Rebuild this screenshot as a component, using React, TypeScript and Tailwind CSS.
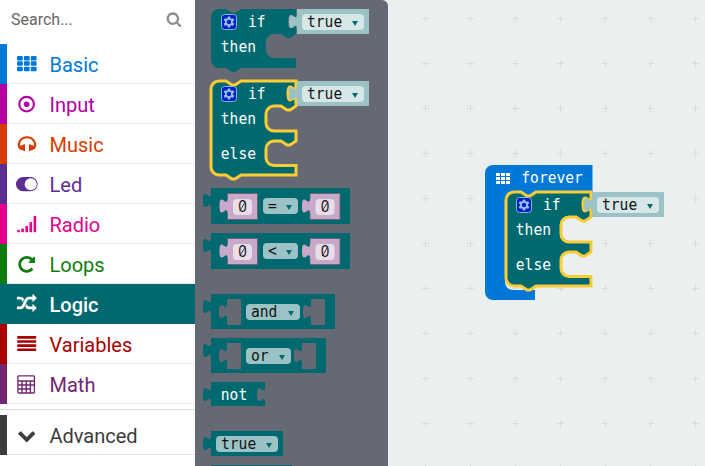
import type { ReactNode } from "react";

const TEAL = "#006970";
const PALE = "#9bc3c6";
const TAB = "c 0,10 -8,-8 -8,7.5 s 8,-2.5 8,7.5";

/* ---------- toolbox ---------- */

function Glyph({ d, size, x, y }: { d: string; size: number; x: number; y: number }) {
  return <path d={d} fill="currentColor" transform={`translate(${x} ${y}) scale(${size / 1792})`} />;
}

const RANDOM =
  "M666 481q-60 92-137 273-22-45-37-72.5t-40.5-63.5-51-56.5-63-35-81.5-14.5h-224q-14 0-23-9t-9-23v-192q0-14 9-23t23-9h224q250 0 410 225zm1126 799q0 14-9 23l-320 320q-9 9-23 9-13 0-22.5-9.5t-9.5-22.5v-192q-32 0-85 .5t-81 1-73-1-71-5-64-10.5-63-18.5-58-28.5-59-40-55-53.5-56-69.5q59-93 136-273 22 45 37 72.5t40.5 63.5 51 56.5 63 35 81.5 14.5h256v-192q0-14 9-23t23-9q12 0 24 10l319 319q9 9 9 23zm0-896q0 14-9 23l-320 320q-9 9-23 9-13 0-22.5-9.5t-9.5-22.5v-192h-256q-48 0-87 15t-69 45-51 61.5-45 77.5q-32 62-78 171-29 66-49.5 111t-54 105-64 100-74 83-90 68.5-106.5 42-128 16.5h-224q-14 0-23-9t-9-23v-192q0-14 9-23t23-9h224q48 0 87-15t69-45 51-61.5 45-77.5q32-62 78-171 29-66 49.5-111t54-105 64-100 74-83 90-68.5 106.5-42 128-16.5h256v-192q0-14 9-23t23-9q12 0 24 10l319 319q9 9 9 23z";
const REPEAT =
  "M1664 256v448q0 26-19 45t-45 19h-448q-42 0-59-40-17-39 14-69l138-138q-148-137-349-137-104 0-198.5 40.5t-163.5 109.5-109.5 163.5-40.5 198.5 40.5 198.5 109.5 163.5 163.5 109.5 198.5 40.5q119 0 225-52t179-147q7-10 23-12 15 0 25 9l137 138q9 8 9.5 20.5t-7.5 22.5q-109 132-264 204.5t-327 72.5q-156 0-298-61t-245-164-164-245-61-298 61-298 164-245 245-164 298-61q147 0 284.5 55.5t244.5 156.5l130-129q29-31 70-14 39 17 39 59z";
const CHEVRON =
  "M1683 808l-742 741q-19 19-45 19t-45-19l-742-741q-19-19-19-45.5t19-45.5l166-165q19-19 45-19t45 19l531 531 531-531q19-19 45-19t45 19l166 165q19 19 19 45.5t-19 45.5z";
const SEARCH =
  "M1216 832q0-185-131.5-316.5t-316.5-131.5-316.5 131.5-131.5 316.5 131.5 316.5 316.5 131.5 316.5-131.5 131.5-316.5zm512 832q0 52-38 90t-90 38q-54 0-90-38l-343-342q-179 124-399 124-143 0-273.5-55.5t-225-150-150-225-55.5-273.5 55.5-273.5 150-225 225-150 273.5-55.5 273.5 55.5 225 150 150 225 55.5 273.5q0 220-124 399l343 343q37 37 37 90z";

const icons: Record<string, ReactNode> = {
  Basic: (
    <g fill="currentColor">
      {[4, 9.3, 14.8].map((y) =>
        [3, 9.9, 16.8].map((x) => <rect key={`${x}-${y}`} x={x} y={y} width="5.8" height="4.4" rx="1" />),
      )}
    </g>
  ),
  Input: (
    <g>
      <circle cx="12.6" cy="12.2" r="7.3" fill="none" stroke="currentColor" strokeWidth="2.1" />
      <circle cx="12.6" cy="12.2" r="2.8" fill="currentColor" />
    </g>
  ),
  Music: (
    <g fill="currentColor">
      <path d="M6.3 16.8 C4.6 14.5 4.6 11 6.2 8.7 C9 4 17 4 19.8 8.7 C21.4 11 21.4 14.5 19.7 16.8" fill="none" stroke="currentColor" strokeWidth="2.1" />
      <path d="M11 12.3 V19 H9.4 V18.3 C7.2 18.5 5.2 17.4 5 15.6 C5.2 13.8 7.2 12.8 9.4 13 V12.3Z" />
      <path d="M15 12.3 V19 H16.6 V18.3 C18.8 18.5 20.8 17.4 21 15.6 C20.8 13.8 18.8 12.8 16.6 13 V12.3Z" />
    </g>
  ),
  Led: (
    <g>
      <rect x="2.6" y="5.7" width="20.4" height="13" rx="6.5" fill="currentColor" stroke="currentColor" strokeWidth="1.2" />
      <circle cx="16.7" cy="12.2" r="6" fill="white" />
    </g>
  ),
  Radio: (
    <g fill="currentColor">
      <rect x="3.2" y="17.9" width="2.6" height="2.3" />
      <rect x="7.3" y="16.6" width="2.6" height="3.6" />
      <rect x="11.4" y="14" width="2.6" height="6.2" />
      <rect x="15.5" y="10" width="2.6" height="10.2" />
      <rect x="19.6" y="4" width="2.6" height="16.2" />
    </g>
  ),
  Loops: <Glyph d={REPEAT} size={19.5} x={2.9} y={2.6} />,
  Logic: <Glyph d={RANDOM} size={19.8} x={2.9} y={1.8} />,
  Variables: (
    <g fill="currentColor">
      <rect x="3.2" y="4.1" width="19" height="2.6" rx="0.4" />
      <rect x="3.2" y="8.2" width="19" height="2.6" rx="0.4" />
      <rect x="3.2" y="12.3" width="19" height="2.6" rx="0.4" />
      <rect x="3.2" y="16.4" width="19" height="2.6" rx="0.4" />
    </g>
  ),
  Math: (
    <g fill="none" stroke="currentColor">
      <rect x="3.9" y="3.8" width="16.5" height="17.2" rx="0.8" strokeWidth="1.3" />
      <path d="M4 9H20.4M4 13H20.4M4 17H16.4M8 9V21M12.2 9V21M16.4 9V21" strokeWidth="1.4" />
    </g>
  ),
  Advanced: <Glyph d={CHEVRON} size={18.8} x={3.3} y={2.8} />,
};

type Category = { name: string; strip: string; text: string };

const categories: Category[] = [
  { name: "Basic", strip: "border-l-[#0078d7]", text: "text-[#0078d7]" },
  { name: "Input", strip: "border-l-[#b4009e]", text: "text-[#b4009e]" },
  { name: "Music", strip: "border-l-[#d83b01]", text: "text-[#d83b01]" },
  { name: "Led", strip: "border-l-[#5c2d91]", text: "text-[#5c2d91]" },
  { name: "Radio", strip: "border-l-[#e3008c]", text: "text-[#e3008c]" },
  { name: "Loops", strip: "border-l-[#107c10]", text: "text-[#107c10]" },
  { name: "Logic", strip: "border-l-[#006970]", text: "text-white bg-[#006970]" },
  { name: "Variables", strip: "border-l-[#a80000]", text: "text-[#a80000]" },
  { name: "Math", strip: "border-l-[#712672]", text: "text-[#712672]" },
];

function Row({ name, strip, text }: Category) {
  return (
    <div className={`flex h-10 items-center border-l-[7px] pl-[7px] ${strip} ${text}`}>
      <div className="flex h-full grow items-center">
        <svg width="24" height="24" className="shrink-0">{icons[name]}</svg>
        <span className={`ml-[11.5px] pt-0.5 text-[20px] leading-6 ${name === "Logic" ? "font-medium" : ""}`}>{name}</span>
      </div>
    </div>
  );
}

function Toolbox() {
  return (
    <aside className="flex w-[195px] shrink-0 flex-col bg-white">
      <div className="flex h-11 items-center justify-between pr-3 pb-[5px] pl-[11px]">
        <span className="text-[16px] text-[#666]">Search...</span>
        <svg width="17" height="17" className="text-[#8c8c8c]">
          <Glyph d={SEARCH} size={16} x={0} y={0.2} />
        </svg>
      </div>
      {categories.map((c) => (
        <div key={c.name} className="relative">
          <Row {...c} />
          {c.name !== "Logic" && <div className="absolute right-0 bottom-0 left-[7px] h-px bg-[#e9ebec]" />}
        </div>
      ))}
      <div className="mt-[5px] mb-[5px] h-px bg-[#dcdfe0]" />
      <div className="relative">
        <Row name="Advanced" strip="border-l-[#3c3c3c]" text="text-[#3c3c3c]" />
        <div className="absolute right-0 bottom-0 left-[7px] h-px bg-[#e3e6e8]" />
      </div>
    </aside>
  );
}

/* ---------- blocks ---------- */

function Label({ x, y, children, fill = "white" }: { x: number; y: number; children: string; fill?: string }) {
  return (
    <text
      x={x}
      y={y}
      fill={fill}
      textLength={children.length * 8.8}
      lengthAdjust="spacingAndGlyphs"
      className="font-['DejaVu_Sans_Mono',monospace] text-[15.4px]"
    >
      {children}
    </text>
  );
}

function Arrow({ x, y }: { x: number; y: number }) {
  return <path d={`M${x - 3} ${y}h6l-3 5z`} fill={TEAL} />;
}

function Dropdown({ x, y, w, fill, children }: { x: number; y: number; w: number; fill: string; children: string }) {
  return (
    <g>
      <rect x={x} y={y} width={w} height="16" rx="4" fill={fill} />
      <Label x={x + 5} y={y + 13} fill="#111">{children}</Label>
      <Arrow x={x + w - 9} y={y + 7} />
    </g>
  );
}

function TrueValue({ x, y }: { x: number; y: number }) {
  return (
    <g transform={`translate(${x} ${y})`}>
      <path d={outer(72, 25)} fill={PALE} />
      <Dropdown x={5} y={5} w={62} fill="#d7e7e8">true</Dropdown>
    </g>
  );
}

function Gear() {
  return (
    <g transform="translate(10.5 5.5)">
      <rect width="15" height="15" rx="3" fill="#0023c8" stroke="#8fb5dc" strokeWidth="1" />
      <g transform="translate(7.5 7.5)">
        {[0, 60, 120].map((a) => (
          <rect key={a} x="-1.3" y="-5.5" width="2.6" height="11" rx="0.4" fill="#9bbbe0" transform={`rotate(${a})`} />
        ))}
        <circle r="3.1" fill="#0023c8" stroke="#9bbbe0" strokeWidth="1.8" />
      </g>
    </g>
  );
}

const TOP = `M0,8 A8,8 0 0,1 8,0 H15 l6,4 3,0 6,-4 H85 v5 ${TAB} V25`;
const mouth = (bottom: number, height: number) =>
  `l-6,4 -3,0 -6,-4 h-7 a8,8 0 0,0 -8,8 v${height - 16} a8,8 0 0,0 8,8 H85 V${bottom}`;
const END = "H30 l-6,4 -3,0 -6,-4 H8 a8,8 0 0,1 -8,-8 z";
const IF_PATH = `${TOP} ${mouth(59, 24)} ${END}`;
const IF_ELSE_PATH = `${TOP} ${mouth(60, 25)} ${mouth(94, 24.5)} ${END}`;

function IfBlock({ withElse = false }: { withElse?: boolean }) {
  return (
    <g>
      <path
        d={withElse ? IF_ELSE_PATH : IF_PATH}
        fill={TEAL}
        stroke={withElse ? "#fc3" : "none"}
        strokeWidth="3"
      />
      <Gear />
      <Label x={37} y={18}>if</Label>
      <Label x={9.8} y={43}>then</Label>
      {withElse && <Label x={9.8} y={78}>else</Label>}
      <TrueValue x={86} y={0} />
    </g>
  );
}

function outer(w: number, h: number) {
  return `M0 0H${w}V${h}H0V20c0,-10 -8,8 -8,-7.5s8,2.5 8,-7.5z`;
}

function NumberValue({ x }: { x: number }) {
  return (
    <g transform={`translate(${x} 5.5)`}>
      <path d={outer(30, 26)} fill="#c8a9c9" />
      <path d="M0 5V0H30V26H0V20" fill="none" stroke="#6c6376" strokeWidth="1" />
      <rect x="5.5" y="5.5" width="19" height="16" rx="4" fill="#e9dde9" />
      <text x="10.8" y="18.6" fill="#111" textLength="8.6" lengthAdjust="spacingAndGlyphs" className="font-['Open_Sans',sans-serif] text-[16px]">0</text>
      <path d="M12.3 17.5L17.9 8.2" stroke="#222" strokeWidth="0.9" />
    </g>
  );
}

function Compare({ op }: { op: string }) {
  return (
    <g>
      <path d={outer(139, 36)} fill={TEAL} />
      <NumberValue x={16.5} />
      <Dropdown x={52} y={10} w={35} fill={PALE}>{op}</Dropdown>
      <NumberValue x={99} />
    </g>
  );
}

function Hole({ x }: { x: number }) {
  return <path transform={`translate(${x} 5)`} d={outer(14, 26)} fill="#646973" />;
}

function BoolOp({ op, w }: { op: string; w: number }) {
  return (
    <g>
      <path d={outer(w, 35)} fill={TEAL} />
      <Hole x={16} />
      <Dropdown x={35} y={10} w={w - 70} fill={PALE}>{op}</Dropdown>
      <Hole x={w - 24} />
    </g>
  );
}

function FlyoutItem({ className, height, children }: { className: string; height: number; children: ReactNode }) {
  return (
    <svg width="170" height={height} className={`block shrink-0 overflow-visible ${className}`}>
      {children}
    </svg>
  );
}

function Flyout() {
  return (
    <section className="flex w-[193px] shrink-0 flex-col overflow-hidden rounded-tr-md bg-[#646973] pl-4">
      <FlyoutItem className="mt-[9px]" height={63}><IfBlock /></FlyoutItem>
      <FlyoutItem className="mt-[9px]" height={98}><IfBlock withElse /></FlyoutItem>
      <FlyoutItem className="mt-[9px]" height={36}><Compare op="=" /></FlyoutItem>
      <FlyoutItem className="mt-[9px]" height={36}><Compare op="<" /></FlyoutItem>
      <FlyoutItem className="mt-[25px]" height={35}><BoolOp op="and" w={124} /></FlyoutItem>
      <FlyoutItem className="mt-[9px]" height={35}><BoolOp op="or" w={115} /></FlyoutItem>
      <FlyoutItem className="mt-[9px]" height={24}>
        <path d={`M0 0H54V5${TAB}V24H0V20c0,-10 -8,8 -8,-7.5s8,2.5 8,-7.5z`} fill={TEAL} />
        <Label x={9.8} y={18}>not</Label>
      </FlyoutItem>
      <FlyoutItem className="mt-[25px]" height={25}>
        <path d={outer(72, 25)} fill={TEAL} />
        <Dropdown x={5} y={5} w={62} fill={PALE}>true</Dropdown>
      </FlyoutItem>
      <FlyoutItem className="mt-[9px]" height={25}>
        <path d={outer(81, 25)} fill={TEAL} />
      </FlyoutItem>
    </section>
  );
}

function Workspace() {
  return (
    <main className="min-w-0 grow bg-[#ebeff0]">
      <svg width="317" height="466" className="block">
        <defs>
          <pattern id="grid" x="15" y="-4" width="45" height="45" patternUnits="userSpaceOnUse">
            <path d="M19 22.5h7M22.5 19v7" stroke="#d8dcdd" strokeWidth="1" />
          </pattern>
        </defs>
        <rect width="317" height="466" fill="url(#grid)" />
        <g transform="translate(97 165)">
          <path
            d="M0 8a8,8 0 0,1 8,-8H107.5V27H50l-6,4 -3,0 -6,-4H28a8,8 0 0,0 -8,8V117a8,8 0 0,0 8,8H50V135H8a8,8 0 0,1 -8,-8z"
            fill="#0078d7"
          />
          <g fill="white">
            {[8, 12, 16].map((y) => [11, 16, 21].map((x) => <rect key={`${x}-${y}`} x={x} y={y} width="4" height="3" />))}
          </g>
          <Label x={36.3} y={18}>forever</Label>
        </g>
        <g transform="translate(118 192)">
          <IfBlock withElse />
        </g>
      </svg>
    </main>
  );
}

export default function App() {
  return (
    <div className="flex h-[466px] w-[705px] overflow-hidden bg-[#ebeff0] font-[Roboto,sans-serif]">
      <Toolbox />
      <Flyout />
      <Workspace />
    </div>
  );
}
